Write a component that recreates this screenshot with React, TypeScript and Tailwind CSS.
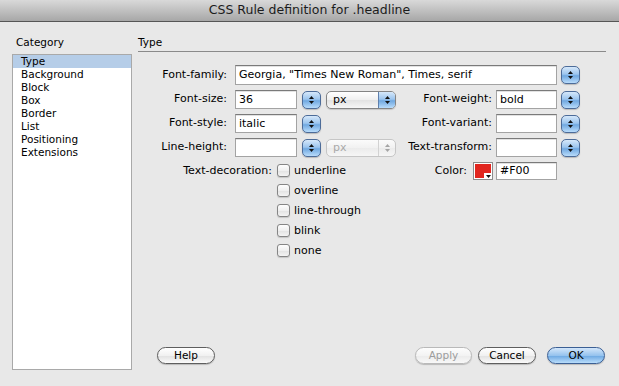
import React from "react";

const categories = ["Type", "Background", "Block", "Box", "Border", "List", "Positioning", "Extensions"];

function Arrows({ color = "#111" }: { color?: string }) {
  return (
    <>
      <svg width="5" height="3" viewBox="0 0 5 3">
        <path d="M2.5 0L5 3H0z" fill={color} />
      </svg>
      <svg width="5" height="3" viewBox="0 0 5 3">
        <path d="M0 0h5L2.5 3z" fill={color} />
      </svg>
    </>
  );
}

function Stepper({ className = "" }: { className?: string }) {
  return (
    <div
      className={
        "flex h-[18px] w-[19px] shrink-0 flex-col items-center justify-center gap-[2px] rounded-[5px] border border-[#4d6c99] bg-[linear-gradient(#d6e8fa,#9cc5ee_45%,#70a8e0_55%,#b9dcfb)] shadow-[0_1px_1px_rgba(0,0,0,0.2)] " +
        className
      }
    >
      <Arrows />
    </div>
  );
}

function Field({ className = "", value = "" }: { className?: string; value?: string }) {
  return (
    <div
      className={
        "shrink-0 overflow-hidden whitespace-nowrap border border-[#a3a3a3] border-t-[#7a7a7a] bg-white pl-[3px] text-[11px] text-black shadow-[inset_0_1px_0_#e2e2e2] " +
        className
      }
    >
      {value}
    </div>
  );
}

function Popup({ disabled = false }: { disabled?: boolean }) {
  return disabled ? (
    <div className="ml-[5px] flex h-[18px] w-[70px] shrink-0 overflow-hidden rounded-[5px] border border-[#c6c6c6] bg-[linear-gradient(#fbfbfb,#f1f1f1_50%,#ebebeb_51%,#f6f6f6)]">
      <span className="flex-1 pl-[6px] text-[11px] leading-[16px] text-[#a9a9a9]">px</span>
      <div className="flex w-[17px] flex-col items-center justify-center gap-[2px] border-l border-[#d2d2d2]">
        <Arrows color="#a5a5a5" />
      </div>
    </div>
  ) : (
    <div className="ml-[5px] flex h-[18px] w-[70px] shrink-0 overflow-hidden rounded-[5px] border border-[#848484] bg-[linear-gradient(#ffffff,#efefef_50%,#e2e2e2_51%,#f6f6f6)] shadow-[0_1px_1px_rgba(0,0,0,0.15)]">
      <span className="flex-1 pl-[6px] text-[11px] leading-[16px] text-black">px</span>
      <div className="flex w-[17px] flex-col items-center justify-center gap-[2px] border-l border-[#5f80ad] bg-[linear-gradient(#d6e8fa,#9cc5ee_45%,#70a8e0_55%,#b9dcfb)]">
        <Arrows />
      </div>
    </div>
  );
}

function Checkbox({ label }: { label: string }) {
  return (
    <div className="flex h-[13px] items-center">
      <div className="h-[13px] w-[13px] rounded-[3px] border border-[#858585] bg-[linear-gradient(#fdfdfd,#f0f0f0_50%,#e2e2e2_51%,#f4f4f4)] shadow-[0_1px_1px_rgba(0,0,0,0.15)]" />
      <span className="ml-[4px] text-[11px] leading-[13px] text-black">{label}</span>
    </div>
  );
}

function Button({
  children,
  className = "",
  kind = "normal",
}: {
  children: React.ReactNode;
  className?: string;
  kind?: "normal" | "primary" | "disabled";
}) {
  const look =
    kind === "primary"
      ? "border-[#3b5f94] bg-[linear-gradient(#d3e6fa,#96c3ee_50%,#6ba7e2_51%,#b9ddfb)] text-black"
      : kind === "disabled"
      ? "border-[#b9b9b9] bg-[linear-gradient(#fdfdfd,#f3f3f3_50%,#ebebeb_51%,#f8f8f8)] text-[#9c9c9c]"
      : "border-[#5e5e5e] bg-[linear-gradient(#ffffff,#f1f1f1_50%,#e1e1e1_51%,#fafafa)] text-black";
  return (
    <div
      className={
        "flex h-[17px] shrink-0 items-center justify-center rounded-full border text-[10.5px] leading-none shadow-[0_1px_1px_rgba(0,0,0,0.2)] " +
        look +
        " " +
        className
      }
    >
      {children}
    </div>
  );
}

export default function App() {
  return (
    <div className="flex h-[386px] w-[619px] flex-col overflow-hidden bg-[#e8e8e8] font-['DejaVu_Sans','Liberation_Sans',sans-serif] text-[11px] text-black">
      {/* Title bar */}
      <div className="flex h-[22px] shrink-0 items-center justify-center border-b border-[#565656] bg-[linear-gradient(#d9d9d9,#a7a7a7)] text-[12.5px] text-[#1c1c1c]">
        CSS Rule definition for .headline
      </div>

      <div className="flex flex-1">
        {/* Category column */}
        <div className="flex w-[132px] shrink-0 flex-col pl-[12px]">
          <div className="ml-[4px] mt-[14px] h-[13px] text-[10.5px] leading-[13px]">Category</div>
          <div className="mt-[5px] h-[316px] border border-[#a9a9a9] bg-white">
            {categories.map((c, i) => (
              <div
                key={c}
                className={
                  "h-[13px] pl-[8px] text-[10.5px] leading-[13px] " + (i === 0 ? "bg-[#b5cde8]" : "")
                }
              >
                {c}
              </div>
            ))}
          </div>
        </div>

        {/* Type panel */}
        <div className="ml-[6px] flex w-[468px] flex-col">
          <div className="mt-[14px] h-[16px] border-b border-[#8a8a8a] text-[10.5px] leading-[13px]">Type</div>

          <div className="mt-[13px] flex h-[20px] items-center">
            <div className="w-[89px] text-right">Font-family:</div>
            <Field className="ml-[8px] h-[20px] w-[322px] leading-[18px]" value={'Georgia, "Times New Roman", Times, serif'} />
            <Stepper className="ml-[4px]" />
          </div>

          <div className="mt-[5px] flex h-[19px] items-center">
            <div className="w-[89px] text-right">Font-size:</div>
            <Field className="ml-[8px] h-[19px] w-[62px] leading-[17px]" value="36" />
            <Stepper className="ml-[5px]" />
            <Popup />
            <div className="w-[96px] text-right">Font-weight:</div>
            <Field className="ml-[4px] h-[19px] w-[61px] leading-[17px]" value="bold" />
            <Stepper className="ml-[4px]" />
          </div>

          <div className="mt-[5px] flex h-[19px] items-center">
            <div className="w-[89px] text-right">Font-style:</div>
            <Field className="ml-[8px] h-[19px] w-[62px] leading-[17px]" value="italic" />
            <Stepper className="ml-[5px]" />
            <div className="w-[75px] shrink-0" />
            <div className="w-[96px] text-right">Font-variant:</div>
            <Field className="ml-[4px] h-[19px] w-[61px]" />
            <Stepper className="ml-[4px]" />
          </div>

          <div className="mt-[5px] flex h-[19px] items-center">
            <div className="w-[89px] text-right">Line-height:</div>
            <Field className="ml-[8px] h-[19px] w-[62px]" />
            <Stepper className="ml-[5px]" />
            <Popup disabled />
            <div className="w-[96px] text-right">Text-transform:</div>
            <Field className="ml-[4px] h-[19px] w-[61px]" />
            <Stepper className="ml-[4px]" />
          </div>

          <div className="mt-[5px] flex">
            <div className="mt-[2px] h-[13px] w-[134px] shrink-0 text-right leading-[13px]">Text-decoration:</div>
            <div className="ml-[5px] mt-[2px] flex w-[128px] shrink-0 flex-col gap-[7px]">
              <Checkbox label="underline" />
              <Checkbox label="overline" />
              <Checkbox label="line-through" />
              <Checkbox label="blink" />
              <Checkbox label="none" />
            </div>
            <div className="h-[18px] w-[62px] shrink-0 text-right leading-[18px]">Color:</div>
            <div className="relative ml-[6px] h-[18px] w-[20px] shrink-0 border border-[#8c8c8c] bg-white p-[1px]">
              <div className="h-full w-full bg-[#e1261f]" />
              <div className="absolute bottom-0 right-0 flex h-[6px] w-[8px] items-center justify-center bg-white">
                <svg width="5" height="3" viewBox="0 0 5 3">
                  <path d="M0 0h5L2.5 3z" fill="#111" />
                </svg>
              </div>
            </div>
            <Field className="ml-[3px] h-[18px] w-[61px] leading-[16px]" value="#F00" />
          </div>

          <div className="mb-[22px] mt-auto flex items-center">
            <Button className="ml-[19px] w-[58px]">Help</Button>
            <Button kind="disabled" className="ml-auto w-[57px]">
              Apply
            </Button>
            <Button className="ml-[6px] w-[58px]">Cancel</Button>
            <Button kind="primary" className="ml-[11px] mr-[1px] w-[58px]">
              OK
            </Button>
          </div>
        </div>
      </div>
    </div>
  );
}
